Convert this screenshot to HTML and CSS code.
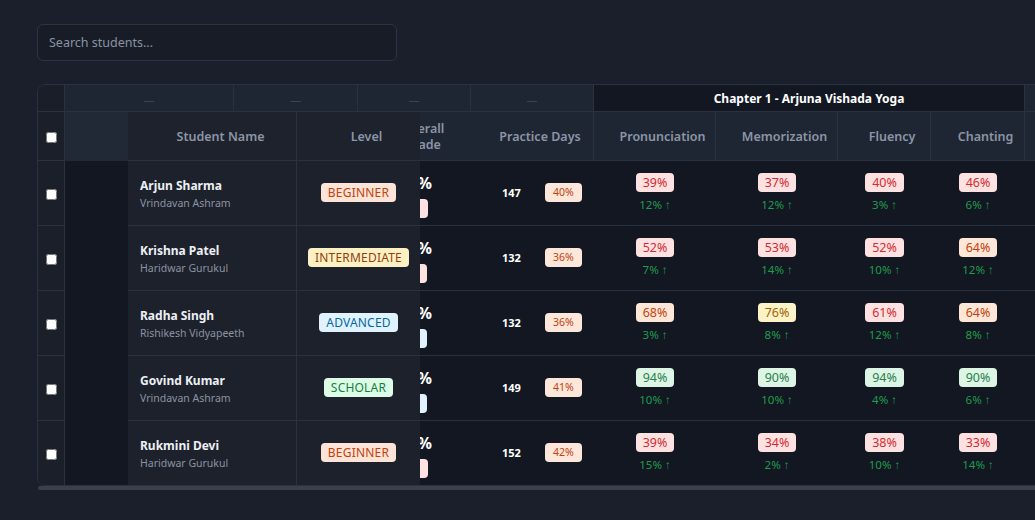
FILE: index.html
```html
<!DOCTYPE html>
<html>
<head>
<meta charset="utf-8">
<link rel="stylesheet" href="styles.css">
</head>
<body>
<div class="page">
  <input class="search" type="text" placeholder="Search students...">
  <div class="grid-wrap">
    <table class="grid">
      <colgroup>
        <col class="c-cb"><col class="c-name"><col class="c-level"><col class="c-overall"><col class="c-practice">
        <col class="c-skill"><col class="c-skill"><col class="c-flu"><col class="c-chant"><col class="c-extra">
      </colgroup>
      <thead>
        <tr class="groups">
          <th class="cb-col"></th>
          <th class="grp"><span class="dash">—</span></th>
          <th class="grp"><span class="dash">—</span></th>
          <th class="grp"><span class="dash">—</span></th>
          <th class="grp"><span class="dash">—</span></th>
          <th class="chapter" colspan="4">Chapter 1 - Arjuna Vishada Yoga</th>
          <th class="grp"></th>
        </tr>
        <tr class="heads">
          <th class="cb-col"><input type="checkbox" class="cb"></th>
          <th class="stick name-col">Student Name</th>
          <th class="stick level-col">Level</th>
          <th class="h-overall">Overall<br>Grade</th>
          <th class="hb">Practice Days</th>
          <th class="hb">Pronunciation</th>
          <th class="hb">Memorization</th>
          <th class="hb">Fluency</th>
          <th class="hb">Chanting</th>
          <th class="hb"></th>
        </tr>
      </thead>
      <tbody>
        <tr>
          <td class="cb-col"><input type="checkbox" class="cb"></td>
          <td class="stick name-col"><div class="nm">Arjun Sharma</div><div class="sub">Vrindavan Ashram</div></td>
          <td class="stick level-col"><span class="lvl beginner">BEGINNER</span></td>
          <td class="overall"><div class="ov-num">41%</div><span class="ov-badge pink">D</span></td>
          <td class="practice"><div class="pd"><span class="days">147</span><span class="pbadge">40%</span></div></td>
          <td class="skill"><span class="sb red">39%</span><div class="chg">12% ↑</div></td>
          <td class="skill"><span class="sb red">37%</span><div class="chg">12% ↑</div></td>
          <td class="skill"><span class="sb red">40%</span><div class="chg">3% ↑</div></td>
          <td class="skill"><span class="sb red">46%</span><div class="chg">6% ↑</div></td>
          <td class="skill"></td>
        </tr>
        <tr>
          <td class="cb-col"><input type="checkbox" class="cb"></td>
          <td class="stick name-col"><div class="nm">Krishna Patel</div><div class="sub">Haridwar Gurukul</div></td>
          <td class="stick level-col"><span class="lvl intermediate">INTERMEDIATE</span></td>
          <td class="overall"><div class="ov-num">55%</div><span class="ov-badge pink">C</span></td>
          <td class="practice"><div class="pd"><span class="days">132</span><span class="pbadge">36%</span></div></td>
          <td class="skill"><span class="sb red">52%</span><div class="chg">7% ↑</div></td>
          <td class="skill"><span class="sb red">53%</span><div class="chg">14% ↑</div></td>
          <td class="skill"><span class="sb red">52%</span><div class="chg">10% ↑</div></td>
          <td class="skill"><span class="sb orange">64%</span><div class="chg">12% ↑</div></td>
          <td class="skill"></td>
        </tr>
        <tr>
          <td class="cb-col"><input type="checkbox" class="cb"></td>
          <td class="stick name-col"><div class="nm">Radha Singh</div><div class="sub">Rishikesh Vidyapeeth</div></td>
          <td class="stick level-col"><span class="lvl advanced">ADVANCED</span></td>
          <td class="overall"><div class="ov-num">67%</div><span class="ov-badge blue">B</span></td>
          <td class="practice"><div class="pd"><span class="days">132</span><span class="pbadge">36%</span></div></td>
          <td class="skill"><span class="sb orange">68%</span><div class="chg">3% ↑</div></td>
          <td class="skill"><span class="sb yellow">76%</span><div class="chg">8% ↑</div></td>
          <td class="skill"><span class="sb red">61%</span><div class="chg">12% ↑</div></td>
          <td class="skill"><span class="sb orange">64%</span><div class="chg">8% ↑</div></td>
          <td class="skill"></td>
        </tr>
        <tr>
          <td class="cb-col"><input type="checkbox" class="cb"></td>
          <td class="stick name-col"><div class="nm">Govind Kumar</div><div class="sub">Vrindavan Ashram</div></td>
          <td class="stick level-col"><span class="lvl scholar">SCHOLAR</span></td>
          <td class="overall"><div class="ov-num">92%</div><span class="ov-badge blue">A</span></td>
          <td class="practice"><div class="pd"><span class="days">149</span><span class="pbadge">41%</span></div></td>
          <td class="skill"><span class="sb green">94%</span><div class="chg">10% ↑</div></td>
          <td class="skill"><span class="sb green">90%</span><div class="chg">10% ↑</div></td>
          <td class="skill"><span class="sb green">94%</span><div class="chg">4% ↑</div></td>
          <td class="skill"><span class="sb green">90%</span><div class="chg">6% ↑</div></td>
          <td class="skill"></td>
        </tr>
        <tr class="last">
          <td class="cb-col"><input type="checkbox" class="cb"></td>
          <td class="stick name-col"><div class="nm">Rukmini Devi</div><div class="sub">Haridwar Gurukul</div></td>
          <td class="stick level-col"><span class="lvl beginner">BEGINNER</span></td>
          <td class="overall"><div class="ov-num">36%</div><span class="ov-badge pink">D</span></td>
          <td class="practice"><div class="pd"><span class="days">152</span><span class="pbadge">42%</span></div></td>
          <td class="skill"><span class="sb red">39%</span><div class="chg">15% ↑</div></td>
          <td class="skill"><span class="sb red">34%</span><div class="chg">2% ↑</div></td>
          <td class="skill"><span class="sb red">38%</span><div class="chg">10% ↑</div></td>
          <td class="skill"><span class="sb red">33%</span><div class="chg">14% ↑</div></td>
          <td class="skill"></td>
        </tr>
      </tbody>
    </table>
  </div>
  <div class="hscroll"></div>
</div>
</body>
</html>
```

FILE: styles.css
```css
html, body {
  margin: 0;
  padding: 0;
  overflow: hidden;
  background: #1a1f2b;
  font-family: "Noto Sans", "Open Sans", sans-serif;
  color: #e6e9ef;
}
.page {
  padding: 24px 0 0 37px;
  width: 1200px;
}
.search {
  display: block;
  box-sizing: border-box;
  width: 360px;
  height: 37px;
  margin: 0 0 23px 0;
  padding: 0 11px;
  background: #181c27;
  border: 1px solid #2c3342;
  border-radius: 6px;
  color: #e6e9ef;
  font-family: inherit;
  font-size: 12.5px;
  outline: none;
}
.search::placeholder { color: #8a93a3; }

.grid-wrap {
  width: 1100px;
  border: 1px solid #2a3140;
  border-radius: 8px;
  overflow: hidden;
  background: #121722;
}
.grid {
  table-layout: fixed;
  border-collapse: separate;
  border-spacing: 0;
  width: 1107px;
}
.c-cb { width: 27px; }
.c-name { width: 169px; }
.c-level { width: 124px; }
.c-overall { width: 113px; }
.c-practice { width: 123px; }
.c-skill { width: 122px; }
.c-flu { width: 93px; }
.c-chant { width: 94px; }
.c-extra { width: 120px; }

th, td {
  box-sizing: border-box;
  padding: 0;
}

/* group row */
.groups th {
  height: 27px;
  background: #1f2633;
  border-bottom: 1px solid #2a3140;
  border-right: 1px solid #2a3140;
}
.groups .cb-col { background: #1a1e29; }
.dash {
  color: #3b4354;
  font-size: 11px;
  font-weight: 400;
}
.groups .chapter {
  background: #121722;
  color: #ffffff;
  font-size: 12px;
  font-weight: 700;
  text-align: center;
}

/* header row */
.heads { background: #212836; }
.heads th {
  height: 49px;
  border-bottom: 1px solid #2a3140;
  color: #8b95a6;
  font-size: 12.5px;
  font-weight: 600;
  text-align: center;
  padding-left: 16px;
  padding-top: 1px;
}
.heads .cb-col { padding: 0; }
.heads .hb {
  background: #1f2633;
  border-right: 1px solid #2a3140;
}
.heads .h-overall {
  background: #1f2633;
  line-height: 16px;
}

.cb-col {
  position: sticky;
  left: 0;
  z-index: 3;
  background: #1b1f2a;
  border-right: 1px solid #2a3140;
  text-align: center;
}
.cb {
  margin: 0;
  width: 11px;
  height: 11px;
  vertical-align: middle;
}

.stick {
  position: sticky;
  z-index: 2;
  background: #1d212b;
}
.heads .stick { background: #1e222c; }
.name-col { left: 90px; }
.level-col {
  left: 258px;
  border-left: 1px solid #2a3140;
}

/* body */
tbody td {
  height: 65px;
  border-bottom: 1px solid #2a3140;
  vertical-align: top;
}
tbody tr.last td { height: 64px; border-bottom: none; }
tbody td.cb-col { vertical-align: middle; }
tbody .name-col { padding: 16px 0 0 12px; }
.nm {
  font-size: 12px;
  font-weight: 700;
  color: #eceff4;
  line-height: 17px;
}
.sub {
  font-size: 10.5px;
  color: #8b93a2;
  line-height: 15px;
  margin-top: 2px;
}
tbody .level-col { text-align: center; padding-top: 22px; line-height: 19px; }
.lvl {
  display: inline-block;
  vertical-align: top;
  font-size: 12px;
  line-height: 19px;
  padding: 0 7px;
  border-radius: 4px;
  letter-spacing: 0.2px;
}
.beginner { background: #fde4d7; color: #c2410c; }
.intermediate { background: #fdf1c4; color: #92400e; }
.advanced { background: #e0f2fe; color: #0369a1; }
.scholar { background: #dcfce7; color: #15803d; }

.overall { text-align: center; padding-top: 12px; }
.ov-num {
  font-size: 16px;
  font-weight: 700;
  color: #ffffff;
  line-height: 20px;
  padding-left: 2px;
}
.ov-badge {
  display: inline-block;
  margin-top: 6px;
  font-size: 11px;
  line-height: 19px;
  padding: 0 9px;
  border-radius: 4px;
}
.ov-badge.pink { background: #fde2e2; color: #dc2626; }
.ov-badge.blue { background: #e0f2fe; color: #0369a1; }

.practice { padding-top: 22px; }
.pd {
  display: flex;
  align-items: center;
  padding-left: 31px;
  gap: 24px;
  height: 19px;
}
.days {
  font-size: 11px;
  font-weight: 700;
  color: #ffffff;
}
.pbadge {
  display: inline-block;
  font-size: 10.5px;
  line-height: 19px;
  padding: 0 8px;
  border-radius: 4px;
  background: #fde6da;
  color: #c2410c;
}

.skill { text-align: center; padding-top: 12px; }
.sb {
  display: inline-block;
  vertical-align: top;
  font-size: 12.5px;
  line-height: 19px;
  padding: 0 7px;
  border-radius: 4px;
}
.sb.red { background: #fee2e2; color: #d42a2f; }
.sb.orange { background: #ffe7d8; color: #c2410c; }
.sb.yellow { background: #fef3c7; color: #a16207; }
.sb.green { background: #dcf5e5; color: #2e7d4f; }
.chg {
  font-size: 11.5px;
  color: #1f9d4c;
  line-height: 14px;
  margin-top: 3px;
}

.hscroll {
  width: 1100px;
  height: 4px;
  margin-left: 1px;
  background: #3a3f4a;
  border-radius: 2px;
}
```
